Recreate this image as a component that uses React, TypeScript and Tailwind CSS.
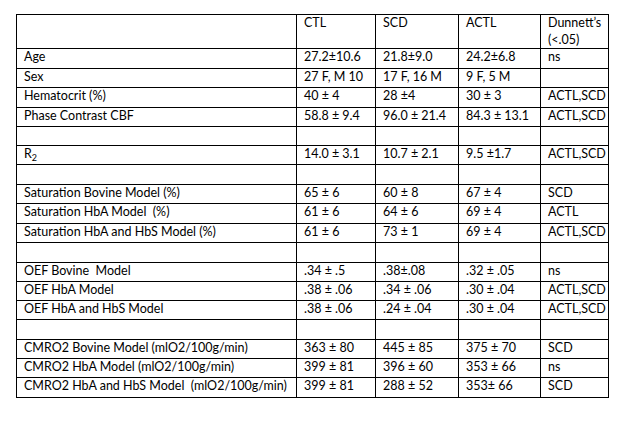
import React from "react";

type Row = { h: string; cells: (React.ReactNode)[] };

const rows: Row[] = [
  { h: "h-[20px]", cells: ["Age", "27.2±10.6", "21.8±9.0", "24.2±6.8", "ns"] },
  { h: "h-[19px]", cells: ["Sex", "27 F, M 10", "17 F, 16 M", "9 F, 5 M", ""] },
  { h: "h-[20px]", cells: ["Hematocrit (%)", "40 ± 4", "28 ±4", "30 ± 3", "ACTL,SCD"] },
  { h: "h-[19px]", cells: ["Phase Contrast CBF", "58.8 ± 9.4", "96.0 ± 21.4", "84.3 ± 13.1", "ACTL,SCD"] },
  { h: "h-[19px]", cells: ["", "", "", "", ""] },
  {
    h: "h-[19px]",
    cells: [
      <span key="r2">
        R<sub className="text-[9px] align-[-1px]">2</sub>
      </span>,
      "14.0 ± 3.1",
      "10.7 ± 2.1",
      "9.5 ±1.7",
      "ACTL,SCD",
    ],
  },
  { h: "h-[20px]", cells: ["", "", "", "", ""] },
  { h: "h-[19px]", cells: ["Saturation Bovine Model (%)", "65 ± 6", "60 ± 8", "67 ± 4", "SCD"] },
  { h: "h-[20px]", cells: ["Saturation HbA Model  (%)", "61 ± 6", "64 ± 6", "69 ± 4", "ACTL"] },
  { h: "h-[19px]", cells: ["Saturation HbA and HbS Model (%)", "61 ± 6", "73 ± 1", "69 ± 4", "ACTL,SCD"] },
  { h: "h-[20px]", cells: ["", "", "", "", ""] },
  { h: "h-[19px]", cells: ["OEF Bovine  Model", ".34 ± .5", ".38±.08", ".32 ± .05", "ns"] },
  { h: "h-[19px]", cells: ["OEF HbA Model", ".38 ± .06", ".34 ± .06", ".30 ± .04", "ACTL,SCD"] },
  { h: "h-[19px]", cells: ["OEF HbA and HbS Model", ".38 ± .06", ".24 ± .04", ".30 ± .04", "ACTL,SCD"] },
  { h: "h-[20px]", cells: ["", "", "", "", ""] },
  { h: "h-[19px]", cells: ["CMRO2 Bovine Model (mlO2/100g/min)", "363 ± 80", "445 ± 85", "375 ± 70", "SCD"] },
  { h: "h-[19px]", cells: ["CMRO2 HbA Model (mlO2/100g/min)", "399 ± 81", "396 ± 60", "353 ± 66", "ns"] },
  { h: "h-[20px]", cells: ["CMRO2 HbA and HbS Model  (mlO2/100g/min)", "399 ± 81", "288 ± 52", "353± 66", "SCD"] },
];

const gridCols = "grid grid-cols-[280px_79px_83px_82px_68px]";

function Cell({ children }: { children?: React.ReactNode }) {
  return (
    <div className="border-r border-b border-black pl-[7px] overflow-visible">
      <div className="-mt-[1px] whitespace-pre">{children}</div>
    </div>
  );
}

export default function App() {
  return (
    <div
      className="w-[629px] h-[422px] bg-white text-black pt-[14px] pl-[16px] text-[12.5px] leading-[17px]"
      style={{ fontFamily: "Lato, 'Liberation Sans', sans-serif" }}
    >
      <div className="w-fit border-l border-t border-black">
        <div className={`${gridCols} h-[34px]`}>
          <Cell />
          <Cell>CTL</Cell>
          <Cell>SCD</Cell>
          <Cell>ACTL</Cell>
          <Cell>
            Dunnett’s
            {"\n"}(&lt;.05)
          </Cell>
        </div>
        {rows.map((r, i) => (
          <div key={i} className={`${gridCols} ${r.h}`}>
            {r.cells.map((c, j) => (
              <Cell key={j}>{c}</Cell>
            ))}
          </div>
        ))}
      </div>
    </div>
  );
}
